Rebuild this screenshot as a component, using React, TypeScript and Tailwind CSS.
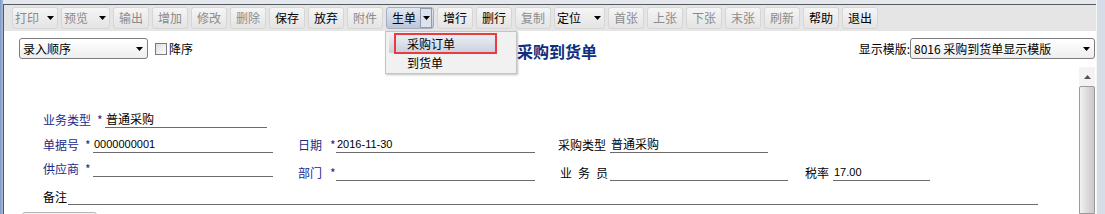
import React from 'react';

type Tool = { label: string; off?: boolean; arrow?: boolean; w: string; active?: boolean };

const tools: Tool[] = [
  { label: '打印', off: true, arrow: true, w: 'w-[46px]' },
  { label: '预览', off: true, arrow: true, w: 'w-[49px]' },
  { label: '输出', off: true, w: 'w-[36px]' },
  { label: '增加', off: true, w: 'w-[36px]' },
  { label: '修改', off: true, w: 'w-[36px]' },
  { label: '删除', off: true, w: 'w-[36px]' },
  { label: '保存', w: 'w-[36px]' },
  { label: '放弃', w: 'w-[36px]' },
  { label: '附件', off: true, w: 'w-[36px]' },
  { label: '生单', arrow: true, active: true, w: 'w-[48px]' },
  { label: '增行', w: 'w-[36px]' },
  { label: '删行', w: 'w-[36px]' },
  { label: '复制', off: true, w: 'w-[36px]' },
  { label: '定位', arrow: true, w: 'w-[51px]' },
  { label: '首张', off: true, w: 'w-[36px]' },
  { label: '上张', off: true, w: 'w-[36px]' },
  { label: '下张', off: true, w: 'w-[36px]' },
  { label: '末张', off: true, w: 'w-[36px]' },
  { label: '刷新', off: true, w: 'w-[36px]' },
  { label: '帮助', w: 'w-[36px]' },
  { label: '退出', w: 'w-[36px]' },
];

const Down = ({ color = '#000' }: { color?: string }) => (
  <svg width="7" height="4" viewBox="0 0 7 4">
    <path d="M0 0h7L3.5 4z" fill={color} />
  </svg>
);

const ToolButton = ({ t }: { t: Tool }) => {
  if (t.active) {
    return (
      <div className={`relative flex h-[22px] items-center rounded-[3px] border border-[#a3aec2] bg-gradient-to-b from-[#e3e8f1] to-[#bcc6d8] pl-[5px] ${t.w}`}>
        <span className="text-black">{t.label}</span>
        <div className="ml-auto mr-[1px] flex h-[20px] w-[12px] items-center justify-center border border-[#8f9bb2] bg-[#dde2eb]">
          <Down />
        </div>
        {/* dropdown of 生单 */}
        <div className="absolute left-[-2px] top-[23px] z-10 h-[43px] w-[132px] border border-[#c4c4c4] bg-[#f1f1f1] shadow-[1px_1px_2px_rgba(0,0,0,0.25)]">
          <div className="relative mx-[3px] mt-[2px] flex h-[19px] w-[107px] items-center bg-gradient-to-b from-[#eef1f6] to-[#c9d0de] pl-[18px] text-black">
            采购订单
            <div className="absolute left-[5px] top-[-1px] h-[21px] w-[103px] border-2 border-[#ea3b40]" />
          </div>
          <div className="flex h-[20px] items-center pl-[21px] text-black">到货单</div>
        </div>
      </div>
    );
  }
  return (
    <div
      className={`flex h-[22px] items-center rounded-[3px] border border-[#d6d6d6] bg-gradient-to-b from-[#f5f5f5] to-[#e4e4e4] ${t.w} ${
        t.arrow ? 'pl-[2px] pr-[3px]' : 'justify-center'
      }`}
    >
      <span className={t.off ? 'text-[#8b8b8b]' : 'text-black'}>{t.label}</span>
      {t.arrow && (
        <span className="ml-auto">
          <Down />
        </span>
      )}
    </div>
  );
};

const Combo = ({ text, w }: { text: string; w: string }) => (
  <div className={`flex h-[21px] items-center rounded-[3px] border border-[#7d7d7d] bg-gradient-to-b from-white to-[#eeeeee] pl-[3px] pr-[4px] ${w}`}>
    <span className="text-black">{text}</span>
    <span className="ml-auto">
      <Down />
    </span>
  </div>
);

const Field = ({ w, value, num }: { w: string; value?: string; num?: boolean }) => (
  <div className={`h-[17px] border-b border-[#6b6b6b] pl-[1px] leading-[16px] text-black ${w} ${num ? "font-['Liberation_Sans',sans-serif] text-[11px]" : ''}`}>
    {value}
  </div>
);

const Star = ({ w }: { w: string }) => <span className={`${w} leading-[16px] text-[#1c2a8c]`}>*</span>;

export default function App() {
  return (
    <div className="flex h-[214px] w-[1105px] overflow-hidden bg-[#e4e7ec] font-['Noto_Sans_CJK_SC',sans-serif] text-[12px]">
      <div className="w-[3px] shrink-0 bg-gradient-to-r from-[#7f9cc6] to-[#a9bcd8]" />
      <div className="mt-[4px] flex w-[1093px] shrink-0 flex-col border-l border-t border-[#555a60] bg-white">
        {/* toolbar */}
        <div className="flex h-[26px] shrink-0 items-center gap-[3px] bg-[#e5e5e5] pl-[8px]">
          {tools.map((t) => (
            <ToolButton key={t.label} t={t} />
          ))}
        </div>

        {/* sort / title / template */}
        <div className="mt-[7px] flex h-[21px] shrink-0 items-center">
          <div className="flex w-[513px] shrink-0 items-center pl-[15px]">
            <Combo text="录入顺序" w="w-[129px]" />
            <div className="ml-[7px] h-[12px] w-[12px] border border-[#7a7a7a] bg-gradient-to-br from-[#dcdcdc] to-white" />
            <span className="ml-[2px] text-black">降序</span>
          </div>
          <div className="mt-[4px] text-[16px] font-bold leading-[18px] text-[#0f2f80]">采购到货单</div>
          <div className="ml-auto flex items-center pr-[1px]">
            <span className="text-black">显示模版:</span>
            <Combo text="8016 采购到货单显示模版" w="w-[185px]" />
          </div>
        </div>

        {/* body */}
        <div className="flex min-h-0 flex-1">
          <div className="flex flex-1 flex-col pl-[39px] pt-[44px]">
            <div className="flex h-[25px] shrink-0 items-end">
              <span className="w-[54px] leading-[16px] text-[#1c2a8c]">业务类型</span>
              <Star w="w-[8px]" />
              <Field w="w-[162px]" value="普通采购" />
            </div>

            <div className="flex h-[25px] shrink-0 items-end">
              <div className="flex w-[255px] items-end">
                <span className="w-[42px] leading-[16px] text-[#1c2a8c]">单据号</span>
                <Star w="w-[8px]" />
                <Field w="w-[180px]" value="0000000001" num />
              </div>
              <div className="flex w-[260px] items-end">
                <span className="w-[32px] leading-[16px] text-[#1c2a8c]">日期</span>
                <Star w="w-[6px]" />
                <Field w="w-[199px]" value="2016-11-30" num />
              </div>
              <div className="flex w-[247px] items-end">
                <span className="w-[52px] leading-[16px] text-black">采购类型</span>
                <Field w="w-[158px]" value="普通采购" />
              </div>
            </div>

            <div className="flex h-[25px] shrink-0 items-start">
              <div className="flex h-[24px] w-[255px] items-end">
                <span className="w-[42px] leading-[16px] text-[#1c2a8c]">供应商</span>
                <Star w="w-[8px]" />
                <Field w="w-[180px]" />
              </div>
              <div className="flex h-[28px] w-[260px] items-end">
                <span className="w-[32px] leading-[16px] text-[#1c2a8c]">部门</span>
                <Star w="w-[6px]" />
                <Field w="w-[199px]" />
              </div>
              <div className="flex h-[28px] w-[247px] items-end">
                <span className="flex w-[52px] justify-between pl-[2px] pr-[2px] leading-[16px] text-black">
                  <span>业</span>
                  <span>务</span>
                  <span>员</span>
                </span>
                <Field w="w-[178px]" />
              </div>
              <div className="flex h-[28px] items-end">
                <span className="w-[28px] leading-[16px] text-black">税率</span>
                <Field w="w-[97px]" value="17.00" num />
              </div>
            </div>

            <div className="flex h-[27px] shrink-0 items-end">
              <span className="w-[25px] leading-[16px] text-black">备注</span>
              <Field w="w-[970px]" />
            </div>

            <div className="ml-[-21px] mt-[7px] h-[20px] w-[75px] shrink-0 rounded-[3px] border border-[#b5b5b5] bg-[#f4f4f4]" />
          </div>

          {/* scrollbar */}
          <div className="mr-[1px] mt-[8px] flex w-[16px] shrink-0 flex-col bg-[#f3f3f3]">
            <div className="flex h-[19px] shrink-0 items-center justify-center">
              <svg width="7" height="4" viewBox="0 0 7 4">
                <path d="M0 4h7L3.5 0z" fill="#555" />
              </svg>
            </div>
            <div className="flex-1 rounded-t-[2px] border border-[#9a9a9a] bg-gradient-to-r from-[#f2f2f2] via-[#dcdcdc] to-[#c9c9c9]" />
          </div>
        </div>
      </div>
      <div className="flex-1 border-l border-[#f7f7f7] bg-[#d7dde6]" />
    </div>
  );
}
